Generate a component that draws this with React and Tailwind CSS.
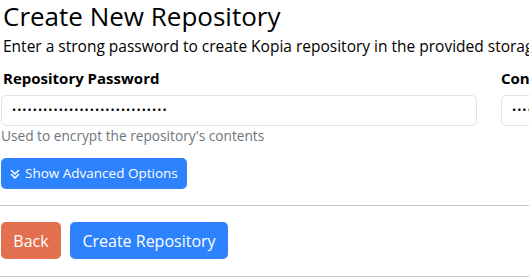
import React from "react";

const dots = "•".repeat(30);

function ChevronsDown() {
  return (
    <svg width="12" height="12" viewBox="0 0 24 24" fill="none" stroke="currentColor" strokeWidth="3.2" strokeLinecap="round" strokeLinejoin="round">
      <path d="M5 5l7 7 7-7" />
      <path d="M5 13l7 7 7-7" />
    </svg>
  );
}

export default function App() {
  return (
    <div className="w-[529px] h-[278px] overflow-hidden bg-white text-[#212529]" style={{ fontFamily: '"Open Sans", "Noto Sans", sans-serif' }}>
      <div className="w-[1000px] pl-[2px]">
        <h1 className="text-[26px] leading-[34px] mt-[-1px] ml-[1px] font-normal text-black">Create New Repository</h1>
        <p className="text-[15.5px] leading-[22px] mt-[2px] ml-[1px] text-black whitespace-nowrap">
          Enter a strong password to create Kopia repository in the provided storage.
        </p>
        <div className="flex gap-[24px] mt-[11px] ml-[-1px]">
          <div className="w-[476px]">
            <div className="text-[15px] leading-[20px] font-bold text-black ml-[2px]">Repository Password</div>
            <div className="mt-[7px] h-[31px] border border-[#dee2e6] rounded-[5px] flex items-center pl-[10px] text-[11px] tracking-[1.05px] text-black">
              {dots}
            </div>
            <div className="text-[13.7px] leading-[18px] mt-[1px] text-[#6c757d]">Used to encrypt the repository's contents</div>
          </div>
          <div className="w-[476px]">
            <div className="text-[15px] leading-[20px] font-bold text-black">Confirm Repository Password</div>
            <div className="mt-[7px] h-[31px] border border-[#dee2e6] rounded-[5px] flex items-center pl-[10px] text-[11px] tracking-[1.05px] text-black">
              {dots}
            </div>
          </div>
        </div>
        <div className="mt-[13px] ml-[-1px]">
          <button className="h-[31px] pl-[8px] pr-[9px] bg-[#2d82fe] text-white rounded-[5px] text-[13.5px] flex items-center gap-[4px]">
            <ChevronsDown />
            <span>Show Advanced Options</span>
          </button>
        </div>
      </div>
      <hr className="mt-[16px] border-0 border-t border-[#c6c6c6]" />
      <div className="flex gap-[9px] mt-[16px] ml-[1px]">
        <button className="h-[37px] w-[60px] bg-[#e2704f] text-white rounded-[5px] text-[16px]">Back</button>
        <button className="h-[37px] w-[158px] bg-[#2d82fe] text-white rounded-[5px] text-[16px]">Create Repository</button>
      </div>
      <hr className="mt-[17px] border-0 border-t border-[#c6c6c6]" />
    </div>
  );
}
